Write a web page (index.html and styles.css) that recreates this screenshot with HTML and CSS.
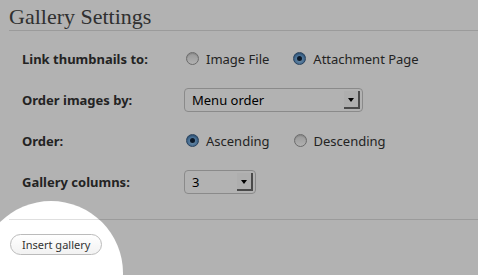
FILE: index.html
```
<!DOCTYPE html>
<html lang="en">
<head>
    <meta charset="UTF-8">
    <title>Gallery Settings</title>
    <link rel="stylesheet" href="styles.css">
</head>
<body>
    <div class="panel">
        <h3 class="panel-title">Gallery Settings</h3>

        <div class="settings">
            <div class="label">Link thumbnails to:</div>
            <div class="field">
                <label class="option"><span class="radio"></span>Image File</label>
                <label class="option"><span class="radio checked"></span>Attachment Page</label>
            </div>

            <div class="label">Order images by:</div>
            <div class="field">
                <div class="select select-wide">
                    <span>Menu order</span>
                    <span class="select-arrow"></span>
                </div>
            </div>

            <div class="label">Order:</div>
            <div class="field">
                <label class="option"><span class="radio checked"></span>Ascending</label>
                <label class="option"><span class="radio"></span>Descending</label>
            </div>

            <div class="label">Gallery columns:</div>
            <div class="field">
                <div class="select select-small">
                    <span>3</span>
                    <span class="select-arrow"></span>
                </div>
            </div>
        </div>

        <div class="panel-footer">
            <button class="button">Insert gallery</button>
        </div>
    </div>

    <!-- dimmed overlay with a spotlight on the insert button -->
    <div class="dim">
        <div class="spotlight"></div>
    </div>
</body>
</html>
```

FILE: styles.css
```
html, body {
    overflow: hidden;
}
body {
    margin: 0;
    background: #fff;
    font-family: "Noto Sans", "DejaVu Sans", sans-serif;
    font-size: 13px;
    color: #333;
}
.panel {
    padding-left: 9px;
}
.panel-title {
    margin: 0;
    padding: 5px 0 1px;
    font-family: "Liberation Serif", Georgia, serif;
    font-weight: normal;
    font-size: 22px;
    line-height: 24px;
    color: #464646;
    border-bottom: 1px solid #dfdfdf;
}
.settings {
    display: grid;
    grid-template-columns: 162px 1fr;
    grid-auto-rows: 41px;
    padding: 7px 0 0 13px;
}
.label {
    display: flex;
    align-items: center;
    font-weight: bold;
    color: #333;
}
.field {
    display: flex;
    align-items: center;
    gap: 22px;
}
.option {
    display: flex;
    align-items: center;
    gap: 7px;
    color: #333;
}
.radio {
    width: 11px;
    height: 11px;
    border-radius: 50%;
    border: 1px solid #9a9a9a;
    background: linear-gradient(#dcdcdc, #fdfdfd);
    box-shadow: inset 0 1px 1px rgba(0, 0, 0, 0.15);
    position: relative;
    margin-left: 2px;
}
.radio.checked {
    border-color: #3c5f86;
    background: radial-gradient(circle at 50% 60%, #a9d3f5 0%, #5c95cc 60%, #3a6fa5 100%);
}
.radio.checked::after {
    content: "";
    position: absolute;
    left: 3px;
    top: 3px;
    width: 5px;
    height: 5px;
    border-radius: 50%;
    background: #10233a;
}
.select {
    display: flex;
    align-items: center;
    justify-content: space-between;
    height: 24px;
    box-sizing: border-box;
    padding: 0 2px 0 7px;
    border: 1px solid #c6c6c6;
    border-radius: 4px;
    background: #fff;
    color: #000;
}
.select-wide {
    width: 179px;
}
.select-small {
    width: 72px;
}
.select-arrow {
    width: 14px;
    height: 16px;
    background: #fafafa;
    border-right: 2px solid #6a6a6a;
    border-bottom: 2px solid #6a6a6a;
    position: relative;
}
.select-arrow::after {
    content: "";
    position: absolute;
    left: 4px;
    top: 7px;
    border-left: 3px solid transparent;
    border-right: 3px solid transparent;
    border-top: 4px solid #000;
}
.panel-footer {
    margin-top: 17px;
    border-top: 1px solid #dfdfdf;
    padding-top: 14px;
}
.button {
    margin-left: 1px;
    height: 21px;
    padding: 0 11px;
    border: 1px solid #bbb;
    border-radius: 11px;
    background: linear-gradient(#fff, #f2f2f2);
    font-family: "Noto Sans", "DejaVu Sans", sans-serif;
    font-size: 11px;
    color: #333;
}
.dim {
    position: fixed;
    inset: 0;
    overflow: hidden;
    pointer-events: none;
}
.spotlight {
    position: absolute;
    left: -21px;
    top: 201px;
    width: 144px;
    height: 144px;
    border-radius: 50%;
    box-shadow: 0 0 0 1000px rgba(0, 0, 0, 0.3);
}
```
